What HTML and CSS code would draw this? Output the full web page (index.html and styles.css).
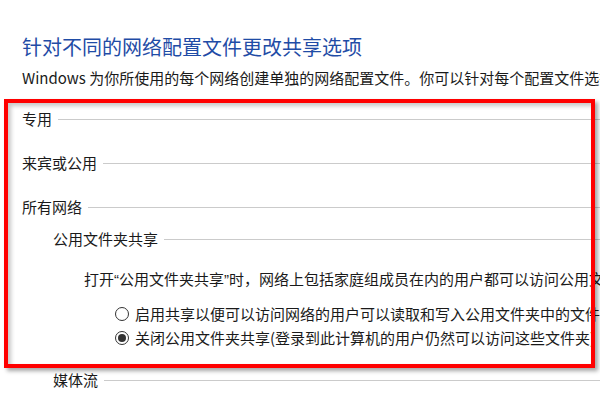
FILE: index.html
```html
<!DOCTYPE html>
<html lang="zh-CN">
<head>
<meta charset="utf-8">
<title>高级共享设置</title>
<link rel="stylesheet" href="styles.css">
</head>
<body>
<div class="page">
  <h1 class="title">针对不同的网络配置文件更改共享选项</h1>
  <p class="intro">Windows 为你所使用的每个网络创建单独的网络配置文件。你可以针对每个配置文件选择特定的选项。</p>

  <div class="section s-first"><span>专用</span><i class="rule"></i></div>
  <div class="section s-next"><span>来宾或公用</span><i class="rule"></i></div>
  <div class="section s-next"><span>所有网络</span><i class="rule"></i></div>

  <div class="subsection sub-first"><span>公用文件夹共享</span><i class="rule"></i></div>
  <p class="desc">打开<span class="q">“</span>公用文件夹共享<span class="q">”</span>时，网络上包括家庭组成员在内的用户都可以访问公用文件夹中的文件。</p>
  <label class="radio r-first"><span class="dot"></span>启用共享以便可以访问网络的用户可以读取和写入公用文件夹中的文件</label>
  <label class="radio r-next"><span class="dot checked"></span>关闭公用文件夹共享(登录到此计算机的用户仍然可以访问这些文件夹)</label>

  <div class="subsection sub-media"><span>媒体流</span><i class="rule"></i></div>
</div>
<div class="highlight"></div>
</body>
</html>
```

FILE: styles.css
```css
html, body {
  margin: 0;
  padding: 0;
  width: 600px;
  height: 400px;
  overflow: hidden;
  background: #fff;
}
body {
  font-family: "Noto Sans CJK SC", "Noto Sans", sans-serif;
  color: #1a1a1a;
  position: relative;
}
.page {
  padding: 34px 0 0 22px;
  white-space: nowrap;
  overflow: hidden;
}
.title {
  margin: 0;
  font-size: 20px;
  line-height: 26px;
  font-weight: normal;
  color: #1f4ca6;
}
.intro {
  margin: 8px 0 0;
  font-size: 15px;
  line-height: 20px;
  overflow: hidden;
}
.section, .subsection {
  display: flex;
  align-items: center;
  font-size: 15px;
  line-height: 20px;
}
.section span, .subsection span { flex: none; }
.rule {
  flex: 1;
  height: 0;
  border-top: 1px solid #cbcbcb;
  margin-left: 6px;
  margin-top: 1px;
}
.s-first { margin-top: 21px; }
.s-next { margin-top: 24px; }
.subsection { padding-left: 31px; }
.sub-first { margin-top: 12px; }
.sub-media { margin-top: 22px; }
.desc {
  margin: 20px 0 0;
  padding-left: 62px;
  font-size: 15px;
  line-height: 20px;
  overflow: hidden;
}
.q {
  font-family: "Liberation Sans", sans-serif;
}
.radio {
  display: flex;
  align-items: center;
  padding-left: 93px;
  font-size: 15px;
  line-height: 20px;
  overflow: hidden;
}
.r-first { margin-top: 14px; }
.r-next { margin-top: 4px; }
.dot {
  width: 12px;
  height: 12px;
  border: 1px solid #333;
  border-radius: 50%;
  margin-right: 6px;
  flex: none;
  display: flex;
  align-items: center;
  justify-content: center;
  background: #fff;
}
.dot.checked::after {
  content: "";
  width: 8px;
  height: 8px;
  border-radius: 50%;
  background: #333;
}
.highlight {
  position: absolute;
  left: 4px;
  top: 99px;
  width: 583px;
  height: 261px;
  border: 4px solid #ff0000;
  box-shadow: 3px 3px 4px rgba(0,0,0,0.35), inset 3px 3px 4px rgba(0,0,0,0.22);
}
```
